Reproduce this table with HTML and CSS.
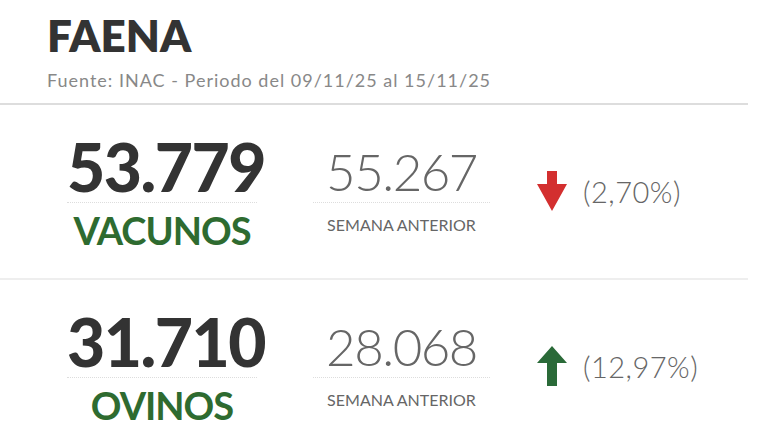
FILE: index.html
```html
<!DOCTYPE html>
<html>
<head>
    <title>Faena</title>
    <link rel="stylesheet" href="styles.css">
</head>
<body>
    <div class="faena">
        <div class="header">
            <h1>FAENA</h1>
            <p class="source">Fuente: INAC - Periodo del 09/11/25 al 15/11/25</p>
        </div>

        <div class="row">
            <div class="col-main">
                <div class="big">53.779</div>
                <div class="label">VACUNOS</div>
            </div>
            <div class="col-prev">
                <div class="prev">55.267</div>
                <div class="prev-label">SEMANA ANTERIOR</div>
            </div>
            <div class="col-change">
                <svg class="arrow down" width="30" height="40" viewBox="0 0 30 40">
                    <polygon points="10,0 20,0 20,13 30,13 15,40 0,13 10,13"/>
                </svg>
                <span class="pct">(2,70%)</span>
            </div>
        </div>

        <div class="row">
            <div class="col-main">
                <div class="big">31.710</div>
                <div class="label">OVINOS</div>
            </div>
            <div class="col-prev">
                <div class="prev">28.068</div>
                <div class="prev-label">SEMANA ANTERIOR</div>
            </div>
            <div class="col-change">
                <svg class="arrow up" width="30" height="40" viewBox="0 0 30 40">
                    <polygon points="15,0 30,17 20,17 20,40 10,40 10,17 0,17"/>
                </svg>
                <span class="pct">(12,97%)</span>
            </div>
        </div>
    </div>
</body>
</html>
```

FILE: styles.css
```css
body {
    margin: 0;
    background: #fff;
    font-family: Lato, "Open Sans", sans-serif;
}
.faena {
    width: 748px;
}
.header {
    padding: 10px 0 12px 47px;
    border-bottom: 2px solid #ddd;
}
h1 {
    margin: 0;
    font-size: 44px;
    line-height: 50px;
    font-weight: 800;
    color: #333;
}
.source {
    margin: 9px 0 0;
    font-size: 18px;
    line-height: 22px;
    letter-spacing: 1px;
    color: #888;
}
.row {
    display: flex;
    align-items: flex-start;
    height: 175px;
    box-sizing: border-box;
    padding-top: 32px;
    border-bottom: 2px solid #eee;
}
.row:last-child {
    border-bottom: none;
}
.col-main {
    width: 190px;
    margin-left: 67px;
    text-align: center;
}
.big {
    font-size: 66px;
    line-height: 60px;
    font-weight: 900;
    letter-spacing: -1.5px;
    color: #333;
    padding-bottom: 5px;
    border-bottom: 1px dotted #ddd;
}
.label {
    margin-top: 7px;
    font-size: 38px;
    line-height: 40px;
    font-weight: 700;
    letter-spacing: -1px;
    color: #2e6b30;
}
.col-prev {
    width: 177px;
    margin-left: 56px;
    text-align: center;
}
.prev {
    font-size: 51px;
    line-height: 60px;
    font-weight: 300;
    letter-spacing: -1.5px;
    color: #666;
    padding-top: 5px;
    border-bottom: 1px dotted #ddd;
}
.prev-label {
    margin-top: 12px;
    font-size: 16px;
    line-height: 20px;
    color: #666;
}
.col-change {
    display: flex;
    align-items: center;
    gap: 16px;
    margin-left: 47px;
    margin-top: 34px;
}
.arrow.down {
    fill: #d32f2f;
}
.arrow.up {
    fill: #2a6a38;
}
.pct {
    font-size: 29px;
    font-weight: 300;
    letter-spacing: 0.5px;
    color: #666;
}
```
